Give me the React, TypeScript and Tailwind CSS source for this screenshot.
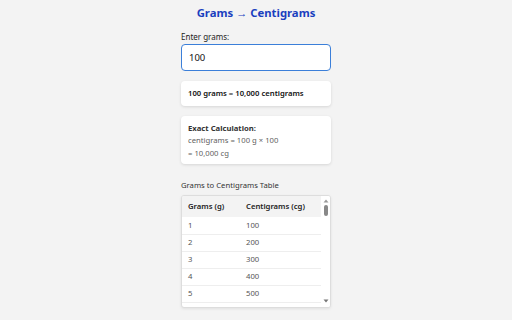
const rows = [
  [1, 100],
  [2, 200],
  [3, 300],
  [4, 400],
  [5, 500],
];

export default function App() {
  return (
    <div className="min-h-[320px] bg-[#f3f3f3] font-['Noto_Sans',sans-serif] text-[#222]">
      <div className="mx-auto w-[150px] pt-[5px]">
        <h1 className="whitespace-nowrap text-center text-[11.3px] font-bold text-[#1a3fbf]">
          Grams → Centigrams
        </h1>

        <label className="mt-[9px] block text-[8px] text-[#222]">Enter grams:</label>
        <input
          defaultValue="100"
          className="mt-[1px] block h-[27px] w-full rounded-[4px] border-[1.5px] border-[#3b7fd9] bg-white px-[7px] text-[9.5px] text-[#111] outline-none"
        />

        <div className="mt-[10px] flex h-[25px] items-center rounded-[4px] bg-white px-[7px] text-[7.7px] font-semibold text-[#111] shadow-[0_1px_3px_rgba(0,0,0,0.12)]">
          100 grams = 10,000 centigrams
        </div>

        <div className="mt-[10px] h-[48px] rounded-[4px] bg-white px-[7px] pt-[6px] text-[7.7px] leading-[12.5px] shadow-[0_1px_3px_rgba(0,0,0,0.12)]">
          <p className="font-bold text-[#333]">Exact Calculation:</p>
          <p className="text-[#5f5f5f]">centigrams = 100 g × 100</p>
          <p className="text-[#5f5f5f]">= 10,000 cg</p>
        </div>

        <p className="mt-[16px] text-[7.7px] text-[#333]">Grams to Centigrams Table</p>

        <div className="mt-[4px] flex h-[113px] overflow-hidden rounded-[3px] border border-[#ddd] bg-white shadow-[0_1px_3px_rgba(0,0,0,0.08)]">
          <table className="h-fit flex-1 border-collapse text-left text-[7.7px]">
            <thead>
              <tr className="h-[21px] bg-[#f3f3f3]">
                <th className="w-[58px] pl-[6px] font-semibold text-[#222]">Grams (g)</th>
                <th className="pl-[6px] font-semibold text-[#222]">Centigrams (cg)</th>
              </tr>
            </thead>
            <tbody>
              {rows.map(([g, cg]) => (
                <tr key={g} className="h-[17px] border-b border-[#eee] text-[#555]">
                  <td className="pl-[6px]">{g}</td>
                  <td className="pl-[6px]">{cg}</td>
                </tr>
              ))}
            </tbody>
          </table>
          <div className="flex w-[9px] flex-col items-center bg-white pt-[3px] pb-[4px]">
            <svg width="6" height="4" viewBox="0 0 6 4" className="shrink-0">
              <path d="M3 0.5 L5.5 3.5 L0.5 3.5 Z" fill="#999" />
            </svg>
            <div className="mt-[2px] h-[11px] w-[4px] rounded-full bg-[#888]" />
            <div className="flex-1" />
            <svg width="6" height="4" viewBox="0 0 6 4" className="shrink-0">
              <path d="M0.5 0.5 L5.5 0.5 L3 3.5 Z" fill="#777" />
            </svg>
          </div>
        </div>
      </div>
    </div>
  );
}
